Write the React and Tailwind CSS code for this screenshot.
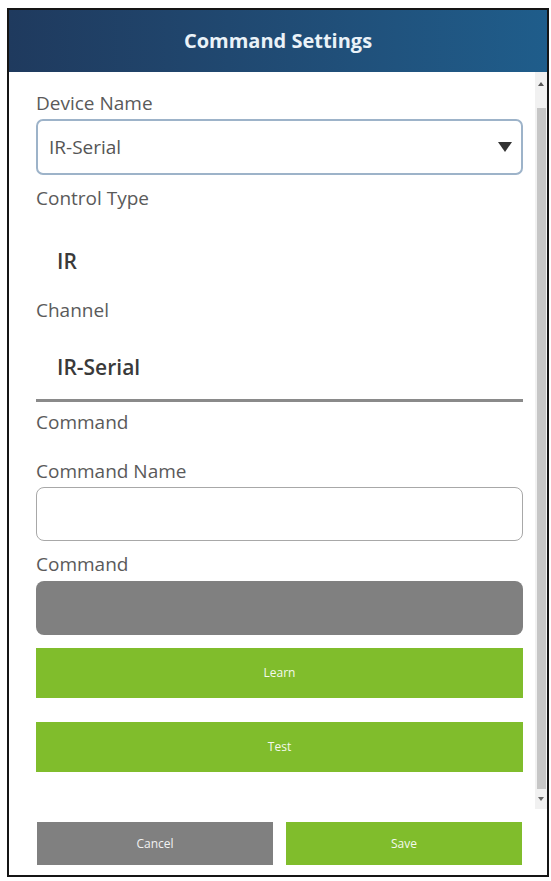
import React from "react";

const font = { fontFamily: '"Open Sans", "Noto Sans", Arial, sans-serif' };

function Label({ children, className = "" }) {
  return (
    <div className={`h-[28px] leading-[28px] text-[19px] text-[#5a5a5a] ${className}`}>
      {children}
    </div>
  );
}

function Value({ children, className = "" }) {
  return (
    <div className={`h-[28px] leading-[28px] pl-[21px] text-[21px] font-semibold text-[#3a3a3a] ${className}`}>
      {children}
    </div>
  );
}

export default function App() {
  return (
    <div className="min-h-screen bg-white pt-[8px] pl-[7px]" style={font}>
      <div className="w-[542px] h-[869px] border-2 border-[#151515] flex flex-col bg-white">
        {/* Header */}
        <div className="h-[62px] shrink-0 flex items-center justify-center bg-gradient-to-r from-[#1f3a5e] to-[#1f5d8b]">
          <span className="text-[20px] font-bold text-[#eaf2f8]">Command Settings</span>
        </div>

        {/* Scrolling body */}
        <div className="h-[737px] shrink-0 flex">
          <div className="flex-1 pl-[27px] pr-[12px] pt-[17px] overflow-hidden">
            <Label>Device Name</Label>
            <div className="mt-[2px] h-[56px] rounded-[7px] border-2 border-[#9db3c9] flex items-center justify-between pl-[11px] pr-[8px]">
              <span className="text-[19px] text-[#555]">IR-Serial</span>
              <svg width="16" height="12" viewBox="0 0 16 12">
                <path d="M1 1 H15 L8 11 Z" fill="#333" />
              </svg>
            </div>

            <Label className="mt-[9px]">Control Type</Label>
            <Value className="mt-[35px]">IR</Value>

            <Label className="mt-[21px]">Channel</Label>
            <Value className="mt-[29px]">IR-Serial</Value>

            <div className="mt-[18px] h-[3px] bg-[#8a8a8a]" />

            <Label className="mt-[6px]">Command</Label>

            <Label className="mt-[21px]">Command Name</Label>
            <div className="mt-[2px] h-[54px] rounded-[8px] border border-[#a8a8a8]" />

            <Label className="mt-[9px]">Command</Label>
            <div className="mt-[3px] h-[54px] rounded-[8px] bg-[#808080]" />

            <button className="mt-[13px] w-full h-[50px] bg-[#80bd2c] text-[#f4f9ec] text-[12px]">
              Learn
            </button>
            <button className="mt-[24px] w-full h-[50px] bg-[#80bd2c] text-[#f4f9ec] text-[12px]">
              Test
            </button>
          </div>

          {/* Scrollbar */}
          <div className="w-[12px] shrink-0 bg-[#f1f1f1] flex flex-col items-center">
            <div className="h-[24px] flex items-center justify-center">
              <svg width="6" height="4" viewBox="0 0 6 4">
                <path d="M0 4 L3 0 L6 4 Z" fill="#555" />
              </svg>
            </div>
            <div className="h-[12px]" />
            <div className="w-[9px] flex-1 bg-[#c6c6c6]" />
            <div className="h-[20px] flex items-center justify-center">
              <svg width="6" height="4" viewBox="0 0 6 4">
                <path d="M0 0 L6 0 L3 4 Z" fill="#666" />
              </svg>
            </div>
          </div>
        </div>

        {/* Footer */}
        <div className="flex gap-[13px] pl-[28px] pt-[13px]">
          <button className="w-[236px] h-[43px] bg-[#808080] text-[#f2f2f2] text-[12px]">Cancel</button>
          <button className="w-[236px] h-[43px] bg-[#80bd2c] text-[#f4f9ec] text-[12px]">Save</button>
        </div>
      </div>
    </div>
  );
}
